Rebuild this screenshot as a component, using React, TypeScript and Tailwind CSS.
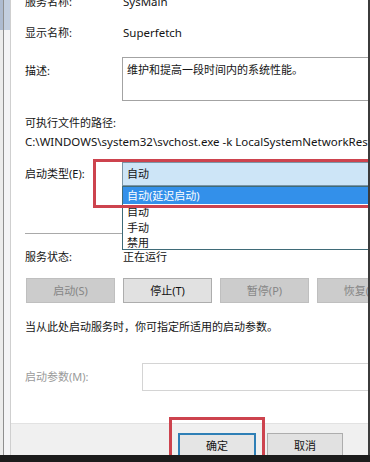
import React from 'react';

const Btn = ({ label, disabled }: { label: string; disabled?: boolean }) => (
  <div
    className={
      disabled
        ? 'h-[25px] w-[89px] shrink-0 flex items-center justify-center border border-[#bfbfbf] bg-[#cccccc] text-[#858585]'
        : 'h-[25px] w-[89px] shrink-0 flex items-center justify-center border border-[#adadad] bg-[#e1e1e1] text-[#111]'
    }
  >
    {label}
  </div>
);

const App = () => {
  return (
    <div className="w-[370px] h-[462px] relative overflow-hidden bg-white flex flex-col text-[11px] leading-[18px] text-[#141414] font-['Noto_Sans','Noto_Sans_CJK_SC',sans-serif]">
      <div className="flex flex-1 min-h-0">
        {/* window edge behind the dialog */}
        <div className="w-[11px] shrink-0 flex">
          <div className="w-[3px] flex flex-col">
            <div className="h-[30px] bg-[#aebbd0]" />
            <div className="flex-1 bg-[#ececec]" />
          </div>
          <div className="w-px bg-[#8f8f8f]" />
          <div className="flex-1 flex flex-col">
            <div className="h-[30px] bg-[#c3cedf]" />
            <div className="flex-1 bg-[#f4f4f6]" />
          </div>
          <div className="w-px bg-[#cfcfcf]" />
        </div>

        <div className="flex-1 min-w-0 flex flex-col overflow-hidden">
          <div className="flex-1 pl-[14px] flex flex-col">
            <div className="-mt-[7px] h-[18px] flex items-center whitespace-nowrap">
              <span className="w-[98px] shrink-0">服务名称:</span>
              <span className="text-[11.5px]">SysMain</span>
            </div>
            <div className="mt-[13px] h-[18px] flex items-center whitespace-nowrap">
              <span className="w-[98px] shrink-0">显示名称:</span>
              <span className="text-[11.5px]">Superfetch</span>
            </div>
            <div className="mt-[15px] h-[44px] flex items-start">
              <span className="w-[97px] shrink-0 pt-[5px]">描述:</span>
              <div className="flex-1 h-[44px] border border-[#a3a3a3] border-r-0 px-[4px] pt-[3px] whitespace-nowrap">
                维护和提高一段时间内的系统性能。
              </div>
            </div>
            <div className="mt-[13px] h-[18px] flex items-center">可执行文件的路径:</div>
            <div className="mt-[1px] h-[18px] flex items-center whitespace-nowrap text-[11.5px]">
              C:\WINDOWS\system32\svchost.exe -k LocalSystemNetworkRestricted
            </div>
            <div className="mt-[11px] h-[24px] flex items-center">
              <span className="w-[97px] shrink-0">启动类型(E):</span>
              <div className="flex-1 h-[24px] relative">
                <div className="h-full border border-[#7b95a6] border-r-0 bg-[#cde5f7] pl-[4px] flex items-center">自动</div>
                <div className="absolute left-0 top-[24px] -right-[2px] h-[64px] bg-white border-l border-b border-t border-[#3f6b78] z-[5] flex flex-col">
                  <div className="h-[17px] bg-[#3390ea] text-white pl-[4px] flex items-center">自动(延迟启动)</div>
                  <div className="h-[16px] pl-[4px] flex items-center">自动</div>
                  <div className="h-[15px] pl-[4px] flex items-center">手动</div>
                  <div className="h-[15px] pl-[4px] flex items-center">禁用</div>
                </div>
              </div>
            </div>
            <div className="mt-[47px] h-px bg-[#a9a9a9] mr-[10px]" />
            <div className="mt-[14px] h-[18px] flex items-center">
              <span className="w-[98px] shrink-0">服务状态:</span>
              <span>正在运行</span>
            </div>
            <div className="mt-[12px] pl-px flex gap-2">
              <Btn label="启动(S)" disabled />
              <Btn label="停止(T)" />
              <Btn label="暂停(P)" disabled />
              <Btn label="恢复(R)" disabled />
            </div>
            <div className="mt-[15px] h-[18px] flex items-center whitespace-nowrap">
              当从此处启动服务时，你可指定所适用的启动参数。
            </div>
            <div className="mt-[27px] h-[28px] flex items-center">
              <span className="w-[117px] shrink-0 text-[#9a9a9a]">启动参数(M):</span>
              <div className="flex-1 h-[28px] border border-[#d4d4d4] border-r-0 bg-white" />
            </div>
          </div>

          <div className="h-[32px] shrink-0 bg-[#f0f0f0] border-t border-[#e2e2e2] flex justify-end gap-[11px] pr-[25px] pt-[9px] overflow-hidden">
            <div className="w-[78px] h-[26px] shrink-0 border-2 border-[#2f7fb6] bg-[#e5e5e5] flex items-center justify-center">确定</div>
            <div className="w-[76px] h-[26px] shrink-0 border border-[#adadad] bg-[#e1e1e1] flex items-center justify-center">取消</div>
          </div>
        </div>

        <div className="w-[2px] shrink-0 bg-[#3b3b3b] relative z-20" />
      </div>
      <div className="h-[7px] shrink-0 bg-[#1c1c1c] relative z-20" />

      {/* red annotation boxes */}
      <div className="absolute left-[93px] top-[159px] -right-[4px] h-[49px] border-[3px] border-[#cd434e] z-10" />
      <div className="absolute left-[169px] top-[417px] w-[96px] h-[60px] border-[3px] border-[#cd434e] z-10" />
    </div>
  );
};

export default App;
